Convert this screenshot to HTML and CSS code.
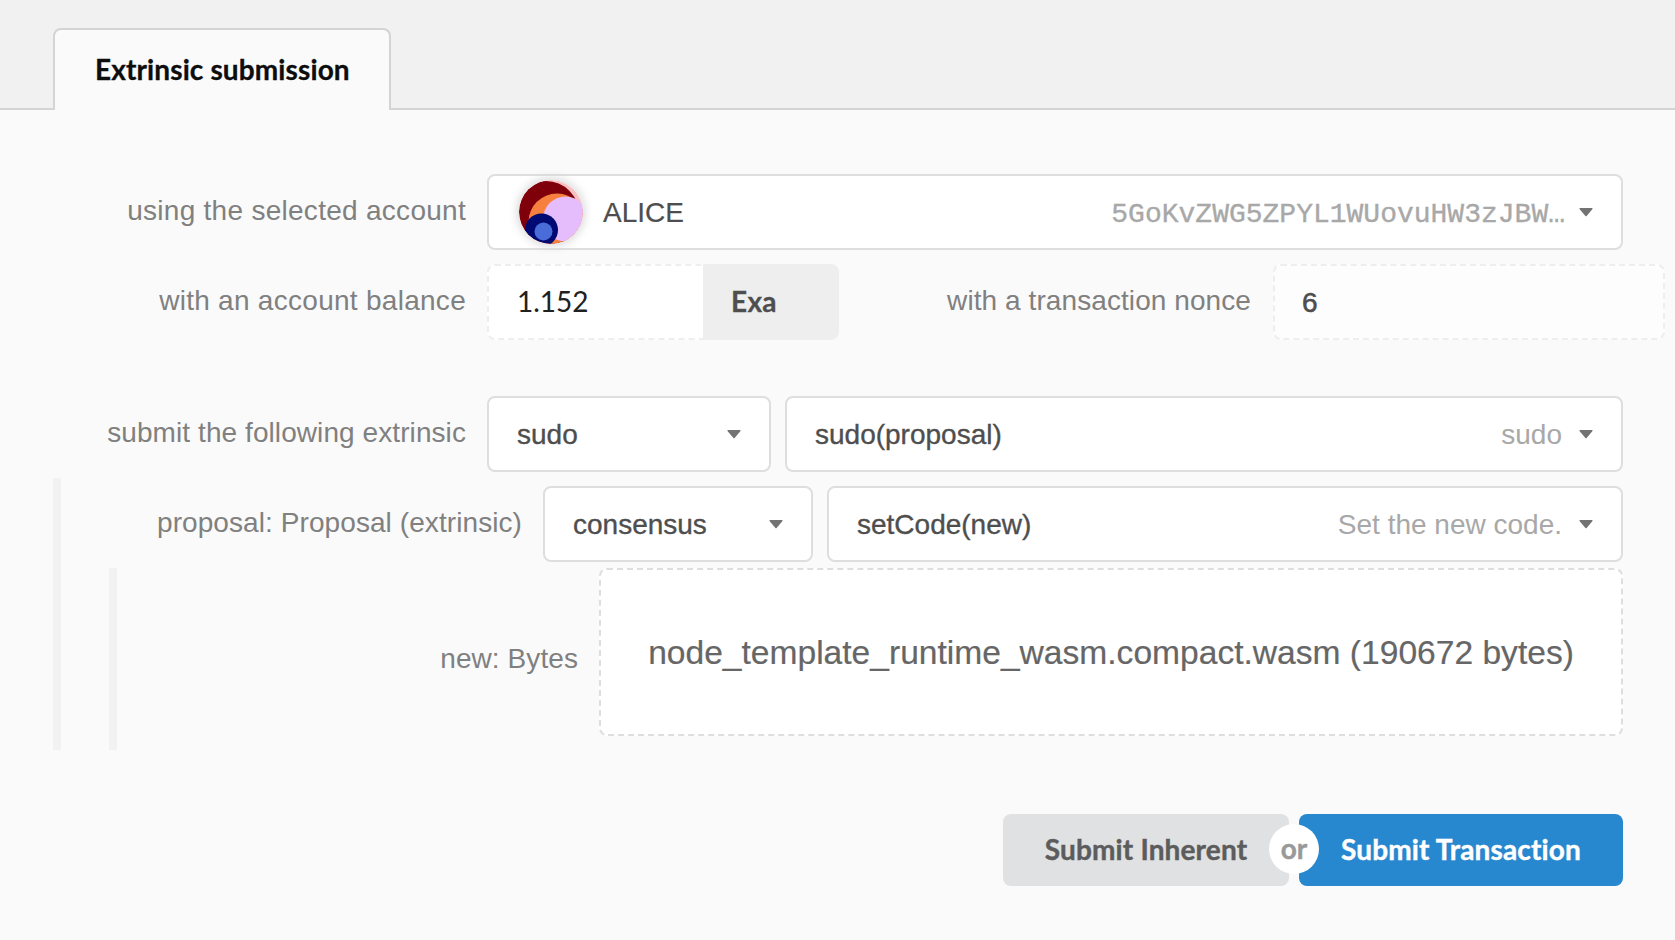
FILE: index.html
```html
<!DOCTYPE html>
<html lang="en">
<head>
<meta charset="utf-8">
<title>Extrinsic submission</title>
<link rel="stylesheet" href="styles.css">
</head>
<body>
<header class="tabs"><div class="tab">Extrinsic submission</div></header>
<main class="form">
  <div class="row">
    <label class="label wide">using the selected account</label>
    <div class="select account">
      <svg class="avatar" width="64" height="64" viewBox="0 0 64 64">
        <defs><clipPath id="disc"><circle cx="32" cy="32" r="32"/></clipPath></defs>
        <g clip-path="url(#disc)">
          <rect width="64" height="64" fill="#f9bfc3"/>
          <circle cx="27" cy="34" r="33" fill="#7f000b"/>
          <circle cx="38" cy="42" r="28.5" fill="#f6813e"/>
          <circle cx="46.500" cy="39" r="22.5" fill="#e5bdfd"/>
          <circle cx="22.500" cy="50" r="16.500" fill="#000a72"/>
          <circle cx="24.500" cy="51.500" r="9" fill="#496cd8"/>
        </g>
      </svg>
      <span class="name">ALICE</span>
      <span class="address">5GoKvZWG5ZPYL1WUovuHW3zJBW…</span>
      <svg class="caret" width="14" height="9" viewBox="0 0 14 9"><path d="M1 0h12q1 .3.500 1L7.600 8q-.6.500-1.200 0L.5 1Q0 .3 1 0z"/></svg>
    </div>
  </div>
  <div class="row split">
    <label class="label wide">with an account balance</label>
    <div class="balance"><span class="amount">1.152</span><span class="unit">Exa</span></div>
    <label class="label nonce-label">with a transaction nonce</label>
    <div class="nonce">6</div>
  </div>
  <div class="row extrinsic">
    <label class="label">submit the following extrinsic</label>
    <div class="select section">
      <span class="value">sudo</span>
      <svg class="caret" width="14" height="9" viewBox="0 0 14 9"><path d="M1 0h12q1 .3.500 1L7.600 8q-.6.500-1.200 0L.5 1Q0 .3 1 0z"/></svg>
    </div>
    <div class="select">
      <span class="value">sudo(proposal)</span><span class="hint">sudo</span>
      <svg class="caret" width="14" height="9" viewBox="0 0 14 9"><path d="M1 0h12q1 .3.500 1L7.600 8q-.6.500-1.200 0L.5 1Q0 .3 1 0z"/></svg>
    </div>
  </div>
  <section class="params outer">
    <div class="row">
      <label class="label">proposal: Proposal (extrinsic)</label>
      <div class="select module">
        <span class="value">consensus</span>
        <svg class="caret" width="14" height="9" viewBox="0 0 14 9"><path d="M1 0h12q1 .3.500 1L7.600 8q-.6.500-1.200 0L.5 1Q0 .3 1 0z"/></svg>
      </div>
      <div class="select">
        <span class="value">setCode(new)</span><span class="hint">Set the new code.</span>
        <svg class="caret" width="14" height="9" viewBox="0 0 14 9"><path d="M1 0h12q1 .3.500 1L7.600 8q-.6.500-1.200 0L.5 1Q0 .3 1 0z"/></svg>
      </div>
    </div>
    <section class="params inner">
      <label class="label bytes">new: Bytes</label>
      <div class="file">node_template_runtime_wasm.compact.wasm (190672 bytes)</div>
    </section>
  </section>
  <div class="buttons">
    <button class="button">Submit Inherent</button>
    <div class="or"><span class="or-text">or</span></div>
    <button class="button primary">Submit Transaction</button>
  </div>
</main>
</body>
</html>
```
FILE: styles.css
```css
* { box-sizing: border-box; }
body {
  margin: 0;
  height: 940px;
  overflow: hidden;
  background: #fafafa;
  font: 28px/40px "Liberation Sans", Arial, sans-serif;
  color: #4e4e4e;
}
.tabs {
  height: 110px;
  padding: 28px 0 0 53px;
  background: #f1f1f1;
  border-bottom: 2px solid #d4d4d4;
}
.tab {
  width: 338px;
  height: 82px;
  border: 2px solid #d4d4d4;
  border-bottom: 0;
  border-radius: 8px 8px 0 0;
  background: #fafafa;
  padding: 19px 0 0 40px;
  font: bold 28px/40px Lato, sans-serif;
  letter-spacing: 0.12px;
  -webkit-text-stroke: 0.3px currentColor;
  color: #0d0d0d;
}
.form { padding: 64px 52px 0 53px; }
.row { display: flex; height: 76px; }
.split { margin: 14px -42px 0 0; }
.extrinsic { margin-top: 56px; }
.label {
  flex: none;
  width: 434px;
  padding: 17px 21px 0 0;
  text-align: right;
  white-space: nowrap;
  color: #808080;
  letter-spacing: 0.08px;
}
.wide { letter-spacing: 0.28px; }
.select {
  flex: 1;
  display: flex;
  align-items: center;
  padding: 0 28px 0 28px;
  background: #fff;
  border: 2px solid #dedede;
  border-radius: 8px;
  white-space: nowrap;
  -webkit-text-stroke: 0.35px currentColor;
}
.section { flex: 0 0 284px; margin-right: 14px; }
.module { flex: 0 0 270px; margin-right: 14px; }
.avatar {
  margin: 0 20px 0 2px;
  border-radius: 50%;
  box-shadow: 0 0 10px 2px #d8d8d8;
}
.name { padding-top: 1px; -webkit-text-stroke: 0.2px currentColor; }
.address {
  margin: 6px 14px 0 auto;
  font-family: "Liberation Mono", "Courier New", monospace;
  color: #a8a8a8;
}
.value { padding-top: 1px; }
.hint { margin: 1px 17px 0 auto; color: #a8a8a8; -webkit-text-stroke: 0; }
.caret { flex: none; margin-left: auto; fill: #737373; }
.address + .caret, .hint + .caret { margin-left: 0; }
.balance { display: flex; width: 352px; font-family: Lato, sans-serif; }
.amount {
  width: 216px;
  padding: 15px 0 0 28px;
  background: #fff;
  border: 2px dashed #eee;
  border-right: 0;
  border-radius: 8px 0 0 8px;
  color: #212121;
}
.unit {
  width: 136px;
  padding: 17px 0 0 28px;
  background: #eee;
  border-radius: 0 8px 8px 0;
  font-weight: bold;
  letter-spacing: 0.3px;
  -webkit-text-stroke: 0.3px currentColor;
}
.nonce-label { letter-spacing: 0.08px; padding-right: 22px; }
.nonce {
  flex: 1;
  padding: 17px 0 0 27px;
  background: #fdfdfd;
  border: 2px dashed #eee;
  border-radius: 8px;
  -webkit-text-stroke: 0.6px currentColor;
}
.params { border-left: 8px solid #f2f2f2; }
.outer { margin-top: 6px; height: 272px; padding: 8px 0 0 48px; }
.inner { margin-top: 6px; height: 182px; display: flex; }
.outer .label { width: 434px; }
.inner .bytes { width: 482px; padding-top: 71px; }
.file {
  flex: 1;
  height: 168px;
  padding-top: 63px;
  border: 2px dashed #dedede;
  border-radius: 8px;
  background: #fff;
  text-align: center;
  white-space: nowrap;
  font-size: 33.6px;
  color: #666;
  -webkit-text-stroke: 0.2px currentColor;
}
.buttons { display: flex; justify-content: flex-end; height: 72px; margin-top: 64px; }
.button {
  width: 286px;
  padding: 0 0 2px;
  border: 0;
  border-radius: 8px;
  background: #e0e1e2;
  color: #5c5c5c;
  font: bold 28px/40px Lato, sans-serif;
  letter-spacing: 0.15px;
  font-variant-ligatures: none;
  -webkit-text-stroke: 0.4px currentColor;
}
.primary { width: 324px; background: #2888cf; color: #fff; }
.or { position: relative; width: 10px; }
.or-text {
  position: absolute;
  left: -20px;
  top: 10px;
  width: 50px;
  height: 50px;
  border-radius: 50%;
  background: #fff;
  color: #999;
  text-align: center;
  font: bold 28px/48px Lato, sans-serif;
  -webkit-text-stroke: 0.4px currentColor;
}
```
